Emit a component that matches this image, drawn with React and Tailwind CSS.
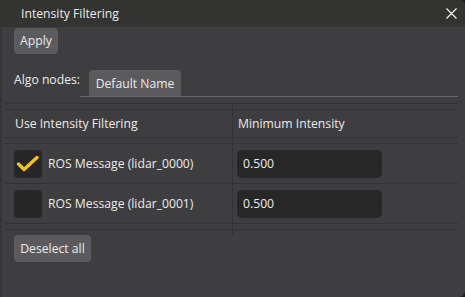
import { useState } from "react";

const rows = [
  { id: "lidar_0000", value: "0.500", on: true },
  { id: "lidar_0001", value: "0.500", on: false },
];

function Check({ on, onClick }) {
  return (
    <button
      type="button"
      onClick={onClick}
      className="grid h-[28px] w-[28px] place-items-center rounded-[4px] bg-[#262626]"
    >
      {on && (
        <svg width="28" height="28" viewBox="0 0 28 28">
          <polyline
            points="4.5,14 10,19.5 23,7.5"
            fill="none"
            stroke="#f2c11c"
            strokeWidth="3.4"
            strokeLinecap="round"
            strokeLinejoin="round"
          />
        </svg>
      )}
    </button>
  );
}

export default function App() {
  const [items, setItems] = useState(rows);

  function toggle(id) {
    setItems((xs) => xs.map((x) => (x.id === id ? { ...x, on: !x.on } : x)));
  }

  return (
    <div className="h-[297px] w-[465px] bg-[#1c1c1c]">
      <div className="flex h-full flex-col overflow-hidden rounded-r-[6px] bg-[#3e3e40] font-['Open_Sans','Noto_Sans',sans-serif] text-[12.2px] leading-[18px] text-[#ebebeb]">
        {/* Title bar */}
        <div className="flex h-[27px] shrink-0 items-center justify-between bg-[#333432] pl-[21px] pr-[8px]">
          <span>Intensity Filtering</span>
          <svg width="11" height="11" viewBox="0 0 11 11">
            <path d="M0.5 0.5 L10.5 10.5 M10.5 0.5 L0.5 10.5" stroke="#f0f0f0" strokeWidth="1.3" />
          </svg>
        </div>

        <div className="flex flex-1 flex-col border-l-2 border-[#363638]">
          <div className="mt-px pl-[12px]">
            <button type="button" className="h-[26px] w-[44px] rounded-[4px] bg-[#5b5b5d]">
              Apply
            </button>
          </div>

          {/* Algo nodes */}
          <div className="mt-[16px] flex pl-[12px] pr-[7px]">
            <span className="w-[66px] shrink-0 whitespace-nowrap pt-px">Algo nodes:</span>
            <div className="flex flex-1 border-b border-[#69696b] pl-[9px]">
              <div className="flex h-[26px] w-[92px] items-center justify-center rounded-t-[4px] bg-[#5b5b5d] pt-px">
                Default Name
              </div>
            </div>
          </div>

          {/* Table */}
          <div className="mt-[6px] ml-[3px] mr-[7px] grid grid-cols-[228px_1fr]">
            <div className="h-[6px] border-t border-r border-[#333335]" />
            <div className="h-[6px] border-t border-[#333335]" />

            <div className="flex h-[28px] items-center border-t border-r border-[#333335] pl-[10px]">
              Use Intensity Filtering
            </div>
            <div className="flex h-[28px] items-center border-t border-[#333335] pl-[5px]">
              Minimum Intensity
            </div>

            <div className="h-[6px] border-t border-r border-[#333335]" />
            <div className="h-[6px] border-t border-[#333335]" />

            {items.map((r) => (
              <div key={r.id} className="contents">
                <div className="flex h-[40px] items-center gap-[6px] border-t border-r border-[#333335] pl-[9px]">
                  <Check on={r.on} onClick={() => toggle(r.id)} />
                  <span>ROS Message ({r.id})</span>
                </div>
                <div className="flex h-[40px] items-center border-t border-[#333335] pl-[4px]">
                  <div className="flex h-[28px] w-[145px] items-center rounded-[5px] bg-[#272727] pl-[6px]">
                    {r.value}
                  </div>
                </div>
              </div>
            ))}

            <div className="h-[6px] border-t border-r border-[#333335]" />
            <div className="h-[6px] border-t border-[#333335]" />

            <div className="h-[6px] border-t border-r border-[#333335]" />
            <div className="h-[6px] border-t border-[#333335]" />
          </div>

          <div className="pl-[12px]">
            <button type="button" className="h-[27px] w-[77px] rounded-[4px] bg-[#5b5b5d]">
              Deselect all
            </button>
          </div>
        </div>
      </div>
    </div>
  );
}
